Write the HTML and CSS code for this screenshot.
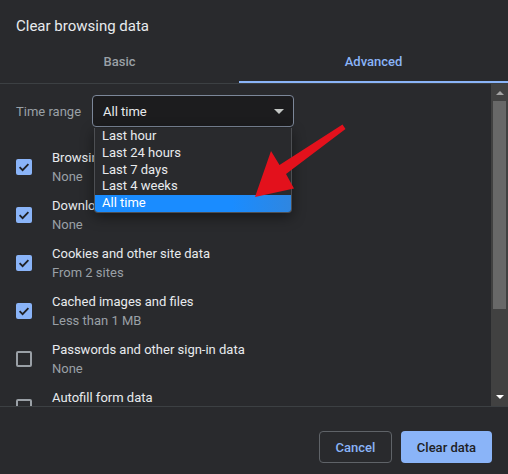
FILE: index.html
```html
<!DOCTYPE html>
<html lang="en">
  <head>
    <meta charset="UTF-8" />
    <title>Clear browsing data</title>
    <link rel="stylesheet" href="styles.css">
  </head>
  <body>
    <div class="dialog">
      <div class="title">Clear browsing data</div>

      <!-- Tabs -->
      <div class="tabs">
        <div class="tab">Basic</div>
        <div class="tab active">Advanced</div>
      </div>

      <div class="body">
        <div class="content">
          <div class="time-row">
            <span class="time-label">Time range</span>
            <div class="select">
              <span>All time</span>
              <span class="caret"></span>
            </div>
          </div>

          <div class="item">
            <span class="check on"><svg viewBox="0 0 16 16"><path d="M3.6 8.2l3 3 5.8-6" /></svg></span>
            <div class="text"><div class="name">Browsing history</div><div class="sub">None</div></div>
          </div>
          <div class="item">
            <span class="check on"><svg viewBox="0 0 16 16"><path d="M3.6 8.2l3 3 5.8-6" /></svg></span>
            <div class="text"><div class="name">Download history</div><div class="sub">None</div></div>
          </div>
          <div class="item">
            <span class="check on"><svg viewBox="0 0 16 16"><path d="M3.6 8.2l3 3 5.8-6" /></svg></span>
            <div class="text"><div class="name">Cookies and other site data</div><div class="sub">From 2 sites</div></div>
          </div>
          <div class="item">
            <span class="check on"><svg viewBox="0 0 16 16"><path d="M3.6 8.2l3 3 5.8-6" /></svg></span>
            <div class="text"><div class="name">Cached images and files</div><div class="sub">Less than 1 MB</div></div>
          </div>
          <div class="item">
            <span class="check"></span>
            <div class="text"><div class="name">Passwords and other sign-in data</div><div class="sub">None</div></div>
          </div>
          <div class="item">
            <span class="check"></span>
            <div class="text"><div class="name">Autofill form data</div><div class="sub">None</div></div>
          </div>

          <!-- open dropdown list -->
          <ul class="options">
            <li>Last hour</li>
            <li>Last 24 hours</li>
            <li>Last 7 days</li>
            <li>Last 4 weeks</li>
            <li class="selected">All time</li>
          </ul>

          <svg class="pointer" viewBox="0 0 508 474">
            <path d="M342.5 123.5 L345.5 128 L286 173 L294 187.5 L255 196 L271 150 L279.5 164 Z" />
          </svg>
        </div>

        <div class="scrollbar">
          <span class="up"></span>
          <div class="thumb"></div>
          <span class="down"></span>
        </div>
      </div>

      <div class="footer">
        <button class="btn cancel">Cancel</button>
        <button class="btn primary">Clear data</button>
      </div>
    </div>
  </body>
</html>
```

FILE: styles.css
```css
body {
  margin: 0;
  padding: 0;
  background: #292a2d;
  font-family: Roboto, "Liberation Sans", Arial, sans-serif;
  color: #e8eaed;
}

.dialog {
  width: 508px;
  height: 474px;
  display: flex;
  flex-direction: column;
  overflow: hidden;
}

.title {
  height: 45px;
  box-sizing: border-box;
  padding: 16px 16px 0;
  font-size: 15px;
  line-height: 20px;
}

/* Tabs */
.tabs {
  display: flex;
  height: 38px;
  border-bottom: 1px solid #3c4043;
}

.tab {
  flex: 0 0 239px;
  display: flex;
  align-items: center;
  justify-content: center;
  font-size: 13px;
  font-weight: 500;
  color: #9aa0a6;
  padding-bottom: 5px;
  box-sizing: border-box;
}

.tab.active {
  flex: 1;
  color: #8ab4f8;
  border-bottom: 2px solid #8ab4f8;
  padding-bottom: 3px;
}

.body {
  display: flex;
  height: 322px;
  border-bottom: 1px solid #3c4043;
}

.content {
  position: relative;
  flex: 1;
  overflow: hidden;
}

.time-row {
  display: flex;
  align-items: center;
  padding: 11px 0 0 16px;
  height: 32px;
}

.time-label {
  width: 76px;
  font-size: 13px;
  color: #9aa0a6;
}

.select {
  width: 202px;
  height: 32px;
  box-sizing: border-box;
  display: flex;
  align-items: center;
  justify-content: space-between;
  padding: 0 9px 0 10px;
  background: #1c1c1e;
  border: 1.5px solid #7c8799;
  border-radius: 4px;
  font-size: 13px;
}

.caret {
  width: 0;
  height: 0;
  border-left: 5px solid transparent;
  border-right: 5px solid transparent;
  border-top: 5px solid #c4c7c5;
}

.item {
  display: flex;
  align-items: center;
  height: 48px;
  padding-left: 16px;
}

.item:first-of-type {
  margin-top: 16px;
}

.time-row + .item {
  margin-top: 16px;
}

.check {
  width: 16px;
  height: 16px;
  box-sizing: border-box;
  border: 2px solid #9aa0a6;
  border-radius: 2px;
  margin-right: 20px;
  flex-shrink: 0;
}

.check.on {
  border: none;
  background: #8ab4f8;
}

.check svg {
  display: block;
  width: 16px;
  height: 16px;
  fill: none;
  stroke: #202124;
  stroke-width: 1.8;
}

.name {
  font-size: 13px;
  line-height: 19px;
  color: #e8eaed;
}

.sub {
  font-size: 13px;
  line-height: 19px;
  color: #9aa0a6;
}

/* Dropdown */
.options {
  position: absolute;
  left: 94px;
  top: 44px;
  width: 198px;
  margin: 0;
  padding: 0;
  list-style: none;
  background: #292a2d;
  border: 1px solid #4d4f53;
  border-top: none;
  border-radius: 0 0 4px 4px;
  box-shadow: 0 4px 14px rgba(0, 0, 0, 0.45);
  box-sizing: border-box;
  overflow: hidden;
}

.options li {
  height: 16.8px;
  line-height: 16.8px;
  padding-left: 7px;
  font-size: 13px;
  color: #e8eaed;
}

.options li.selected {
  background: linear-gradient(90deg, #1a8cff 70%, #2f86e0);
  color: #fff;
}

.pointer {
  position: absolute;
  left: 0;
  top: -83px;
  width: 508px;
  height: 474px;
  pointer-events: none;
}

.pointer path {
  fill: #e3111c;
}

/* Scrollbar */
.scrollbar {
  width: 17px;
  background: #414141;
  display: flex;
  flex-direction: column;
  align-items: center;
}

.up,
.down {
  width: 0;
  height: 0;
  border-left: 4px solid transparent;
  border-right: 4px solid transparent;
}

.up {
  margin-top: 7px;
  border-bottom: 4px solid #a3a3a3;
}

.thumb {
  width: 13px;
  height: 208px;
  margin-top: 6px;
  background: #686868;
}

.down {
  margin-top: auto;
  margin-bottom: 7px;
  border-top: 4px solid #ffffff;
}

/* Footer */
.footer {
  flex: 1;
  display: flex;
  justify-content: flex-end;
  align-items: flex-start;
  gap: 9px;
  padding: 24px 16px 0 0;
}

.btn {
  height: 32px;
  border-radius: 4px;
  font-family: Roboto, "Liberation Sans", Arial, sans-serif;
  font-size: 13px;
  font-weight: 500;
  cursor: pointer;
}

.cancel {
  width: 73px;
  background: transparent;
  border: 1px solid #5f6368;
  color: #8ab4f8;
}

.primary {
  width: 91px;
  background: #8ab4f8;
  border: none;
  color: #202124;
}
```
